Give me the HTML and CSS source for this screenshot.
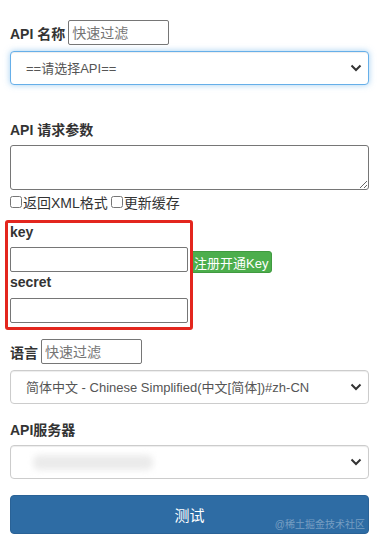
FILE: index.html
```html
<!DOCTYPE html>
<html lang="zh-CN">
<head>
    <meta charset="UTF-8">
    <meta name="viewport" content="width=device-width, initial-scale=1.0">
    <title>API 测试</title>
    <link rel="stylesheet" href="styles.css">
</head>
<body>
    <form class="api-form">
        <div class="inline-row">
            <label class="field-label">API 名称</label>
            <input class="filter-input" type="text" placeholder="快速过滤">
        </div>
        <div class="select-wrap select-focus">
            <select class="form-select">
                <option>==请选择API==</option>
            </select>
            <svg class="chevron" width="12" height="8" viewBox="0 0 12 8"><path d="M1.5 1.5 L6 6 L10.5 1.5" fill="none" stroke="#333" stroke-width="2"/></svg>
        </div>

        <div class="field-label block-label params-label">API 请求参数</div>
        <textarea class="params-box"></textarea>
        <div class="check-row">
            <label><input type="checkbox">返回XML格式</label>
            <label><input type="checkbox">更新缓存</label>
        </div>

        <div class="auth-group">
            <div class="field-label block-label">key</div>
            <div class="key-row">
                <input class="auth-input" type="text">
                <button type="button" class="btn-register">注册开通Key</button>
            </div>
            <div class="field-label block-label">secret</div>
            <input class="auth-input" type="text">
            <div class="mark-box"></div>
        </div>

        <div class="inline-row lang-row">
            <label class="field-label">语言</label>
            <input class="filter-input" type="text" placeholder="快速过滤">
        </div>
        <div class="select-wrap">
            <select class="form-select">
                <option>简体中文 - Chinese Simplified(中文[简体])#zh-CN</option>
            </select>
            <svg class="chevron" width="12" height="8" viewBox="0 0 12 8"><path d="M1.5 1.5 L6 6 L10.5 1.5" fill="none" stroke="#333" stroke-width="2"/></svg>
        </div>

        <div class="field-label block-label server-label">API服务器</div>
        <div class="select-wrap">
            <div class="form-select fake-select"><span class="blurred"></span></div>
            <svg class="chevron" width="12" height="8" viewBox="0 0 12 8"><path d="M1.5 1.5 L6 6 L10.5 1.5" fill="none" stroke="#333" stroke-width="2"/></svg>
        </div>

        <button type="button" class="btn-test">测试<span class="watermark">@稀土掘金技术社区</span></button>
    </form>
</body>
</html>
```

FILE: styles.css
```css
body {
    margin: 0;
    background-color: #fff;
    font-family: "Liberation Sans", "Noto Sans CJK SC", sans-serif;
    font-size: 14px;
    color: #333;
}
.api-form {
    padding: 20px 10px 0 10px;
}
.field-label {
    font-weight: bold;
    font-size: 14px;
    color: #333;
}
.block-label {
    display: block;
    line-height: 20px;
}
.inline-row {
    display: flex;
    align-items: center;
    gap: 3px;
    height: 25px;
}
.filter-input {
    width: 101px;
    height: 25px;
    box-sizing: border-box;
    border: 1px solid #767676;
    border-radius: 2px;
    padding: 0 3px;
    font-family: inherit;
    font-size: 14px;
}
.filter-input::placeholder {
    color: #757575;
}
.select-wrap {
    position: relative;
    margin-top: 6px;
}
.form-select {
    display: block;
    width: 100%;
    height: 34px;
    box-sizing: border-box;
    border: 1px solid #ccc;
    border-radius: 4px;
    padding: 0 30px 0 15px;
    background-color: #fff;
    font-family: inherit;
    font-size: 13px;
    color: #555;
    -webkit-appearance: none;
    appearance: none;
    box-shadow: inset 0 1px 1px rgba(0, 0, 0, 0.075);
}
.select-focus .form-select {
    border-color: #66afe9;
    box-shadow: inset 0 1px 1px rgba(0, 0, 0, 0.075), 0 0 6px rgba(102, 175, 233, 0.6);
}
.chevron {
    position: absolute;
    right: 7px;
    top: 13px;
}
.params-label {
    margin-top: 35px;
}
.params-box {
    display: block;
    width: 100%;
    height: 45px;
    box-sizing: border-box;
    margin-top: 5px;
    border: 1px solid #767676;
    border-radius: 3px;
    resize: vertical;
}
.check-row {
    display: flex;
    gap: 3px;
    height: 20px;
    align-items: center;
    margin-top: 2px;
    font-size: 14px;
}
.check-row label {
    display: flex;
    align-items: center;
}
.check-row input {
    margin: 0 1px 0 0;
    width: 12px;
    height: 12px;
}
.auth-group {
    position: relative;
    margin-top: 10px;
}
.key-row {
    display: flex;
    align-items: flex-end;
    gap: 2px;
    margin-top: 5px;
}
.auth-input {
    display: block;
    width: 178px;
    height: 25px;
    box-sizing: border-box;
    border: 1px solid #767676;
    border-radius: 2px;
}
.auth-group > .auth-input {
    margin-top: 6px;
}
.btn-register {
    height: 22px;
    margin-bottom: -1px;
    padding: 0 3px;
    border: 1px solid #409a40;
    border-radius: 3px;
    background-color: #4cae4c;
    color: #fff;
    font-family: inherit;
    font-size: 13px;
}
.mark-box {
    position: absolute;
    left: -5px;
    top: -2px;
    width: 188px;
    height: 110px;
    box-sizing: border-box;
    border: 3px solid #e3261e;
    border-radius: 3px;
}
.lang-row {
    margin-top: 16px;
}
.server-label {
    margin-top: 16px;
}
.server-label + .select-wrap {
    margin-top: 5px;
}
.fake-select {
    position: relative;
}
.blurred {
    position: absolute;
    left: 22px;
    top: 9px;
    width: 120px;
    height: 15px;
    border-radius: 6px;
    background-color: #ebebeb;
    filter: blur(3px);
}
.btn-test {
    position: relative;
    display: block;
    width: 100%;
    height: 39px;
    margin-top: 16px;
    border: 1px solid #2a6296;
    border-radius: 4px;
    background-color: #2e6ca4;
    color: #fff;
    font-family: inherit;
    font-size: 15px;
}
.watermark {
    position: absolute;
    right: 3px;
    bottom: 2px;
    font-size: 10px;
    color: rgba(255, 255, 255, 0.35);
}
```
